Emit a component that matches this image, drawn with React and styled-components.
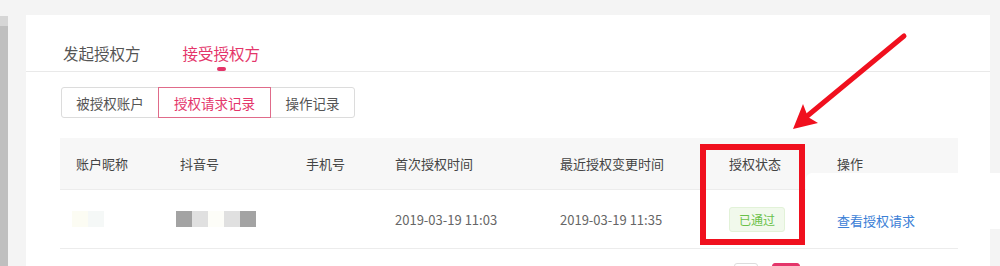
import React from "react";
import styled, { createGlobalStyle } from "styled-components";

const Global = createGlobalStyle`
  body {
    margin: 0;
    background: #f4f4f4;
    font-family: "Noto Sans CJK SC", "Noto Sans", sans-serif;
  }
`;

const Page = styled.div`
  position: relative;
  display: flex;
  width: 1000px;
  height: 266px;
  overflow: hidden;
`;

const ScrollStrip = styled.div`
  width: 8px;
  margin-top: 16px;
  background: #bfbfbf;
  border-top: 10px solid #d6d6d6;
`;

const Card = styled.div`
  margin: 15px 0 0 18px;
  width: 964px;
  background: #fff;
`;

const TabBar = styled.div`
  display: flex;
  gap: 42px;
  height: 57px;
  padding-left: 37px;
  border-bottom: 1px solid #e9e9e9;
  box-sizing: border-box;
`;

const Tab = styled.div`
  position: relative;
  padding-top: 27px;
  font-size: 15.5px;
  color: ${(p) => (p.$active ? "#e4356a" : "#555")};

  &::after {
    content: "";
    display: ${(p) => (p.$active ? "block" : "none")};
    position: absolute;
    left: 50%;
    bottom: 0;
    width: 9px;
    height: 4px;
    margin-left: -4px;
    border-radius: 2px;
    background: #e4356a;
  }
`;

const Body = styled.div`
  padding: 15px 32px 0 35px;
`;

const Segments = styled.div`
  display: inline-flex;
  height: 31px;
  border: 1px solid #dcdcdc;
  border-radius: 3px;
  box-sizing: border-box;
`;

const Segment = styled.div`
  display: flex;
  align-items: center;
  justify-content: center;
  box-sizing: border-box;
  width: ${(p) => p.$w}px;
  font-size: 13.5px;
  color: ${(p) => (p.$active ? "#e4356a" : "#555")};
  border: 1px solid ${(p) => (p.$active ? "#e06b8a" : "transparent")};
  margin: -1px 0;
`;

const Table = styled.div`
  margin-top: 20px;
  margin-left: -1px;
  width: 898px;
`;

const Row = styled.div`
  display: grid;
  grid-template-columns: 104px 126px 89px 165px 169px 108px 137px;
  align-items: center;
  height: ${(p) => (p.$head ? 51 : 58)}px;
  background: ${(p) => (p.$head ? "#f7f7f7" : "#fff")};
  border-bottom: 1px solid #ececec;
  font-size: 13px;
  color: ${(p) => (p.$head ? "#444" : "#666")};
`;

const Cell = styled.div`
  padding-left: ${(p) => p.$pad ?? 16}px;
  display: flex;
  align-items: center;
`;

const Block = styled.span`
  width: 16px;
  height: 16px;
  background: ${(p) => p.$c};
`;

const Tag = styled.span`
  padding: 3px 9px;
  font-size: 12px;
  color: #6ac14a;
  background: #f1f9ec;
  border: 1px solid #e2f2d8;
  border-radius: 3px;
`;

const Link = styled.span`
  position: relative;
  z-index: 1;
  color: #3b80d6;
  margin-top: 2px;
`;

const Pager = styled.div`
  display: flex;
  gap: 14px;
  margin: 14px 0 0 673px;
`;

const PageBox = styled.span`
  width: ${(p) => (p.$active ? 28 : 24)}px;
  height: 26px;
  box-sizing: border-box;
  border: 1px solid ${(p) => (p.$active ? "#e4356a" : "#ddd")};
  background: ${(p) => (p.$active ? "#e4356a" : "#fff")};
  border-radius: 3px;
`;

const WhitePatch = styled.div`
  position: absolute;
  left: 806px;
  top: 173px;
  width: 194px;
  height: 56px;
  background: #fff;
  border-radius: 6px 0 0 0;
`;

const RedBox = styled.div`
  position: absolute;
  left: 700px;
  top: 144px;
  width: 105px;
  height: 101px;
  box-sizing: border-box;
  border: 6px solid #f0101e;
`;

const Arrow = styled.svg`
  position: absolute;
  left: 0;
  top: 0;
`;

export default function App() {
  const blocks = ["#a3a3a3", "#e0e0e0", "#fdfdf8", "#e0e0e0", "#a3a3a3"];
  return (
    <Page>
      <Global />
      <ScrollStrip />
      <Card>
        <TabBar>
          <Tab>发起授权方</Tab>
          <Tab $active>接受授权方</Tab>
        </TabBar>
        <Body>
          <Segments>
            <Segment $w={96}>被授权账户</Segment>
            <Segment $w={113} $active>授权请求记录</Segment>
            <Segment $w={83}>操作记录</Segment>
          </Segments>
          <Table>
            <Row $head>
              <Cell>账户昵称</Cell>
              <Cell>抖音号</Cell>
              <Cell>手机号</Cell>
              <Cell>首次授权时间</Cell>
              <Cell>最近授权变更时间</Cell>
              <Cell>授权状态</Cell>
              <Cell>操作</Cell>
            </Row>
            <Row>
              <Cell $pad={12}>
                <Block $c="#fcfcf3" />
                <Block $c="#f5f8f7" />
              </Cell>
              <Cell $pad={12}>
                {blocks.map((c, i) => (
                  <Block key={i} $c={c} />
                ))}
              </Cell>
              <Cell />
              <Cell>2019-03-19 11:03</Cell>
              <Cell>2019-03-19 11:35</Cell>
              <Cell>
                <Tag>已通过</Tag>
              </Cell>
              <Cell>
                <Link>查看授权请求</Link>
              </Cell>
            </Row>
          </Table>
          <Pager>
            <PageBox />
            <PageBox $active />
          </Pager>
        </Body>
      </Card>
      <WhitePatch />
      <RedBox />
      <Arrow width="1000" height="266" viewBox="0 0 1000 266">
        <line x1="904" y1="36" x2="800" y2="122" stroke="#f0101e" strokeWidth="5" strokeLinecap="round" />
        <polygon points="793,129 803,104 808,117 818,123" fill="#f0101e" />
      </Arrow>
    </Page>
  );
}
